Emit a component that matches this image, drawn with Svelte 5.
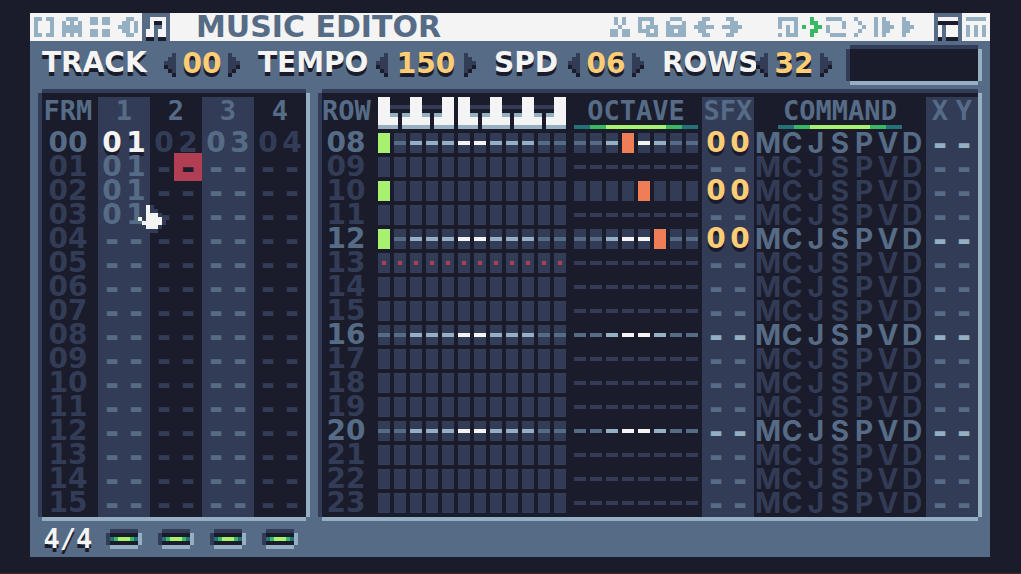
<script lang="ts">
	type Icon = { name: string; rows: string[]; active?: boolean; green?: boolean };

	const tabs: Icon[] = [
		{ name: 'Code editor', rows: ['##.##', '#...#', '#...#', '#...#', '##.##'] },
		{ name: 'Sprite editor', rows: ['.###.', '#.#.#', '#####', '#####', '#.#.#'] },
		{ name: 'Map editor', rows: ['##.##', '##.##', '.....', '##.##', '##.##'] },
		{ name: 'Sound editor', rows: ['..##.', '.##.#', '###.#', '.##.#', '..##.'] },
		{ name: 'Music editor', rows: ['.####', '.#..#', '.#..#', '##.##', '##.##'], active: true }
	];

	const editTools: Icon[] = [
		{ name: 'Cut', rows: ['.#.#.', '.#.#.', '..#..', '##.##', '##.##'] },
		{ name: 'Copy', rows: ['####.', '#..#.', '#.###', '###.#', '..###'] },
		{ name: 'Paste', rows: ['.###.', '#...#', '#####', '##.##', '#####'] },
		{ name: 'Undo', rows: ['..##.', '.##..', '#####', '.##..', '..##.'] },
		{ name: 'Redo', rows: ['.##..', '..##.', '#####', '..##.', '.##..'] }
	];

	const playTools: Icon[] = [
		{ name: 'Sustain', rows: ['#####', '#...#', '#.#.#', '..#.#', '#.###'] },
		{ name: 'Follow', rows: ['..#..', '..##.', '#..##', '..##.', '..#..'], green: true },
		{ name: 'Loop', rows: ['####.', '....#', '#...#', '#....', '.####'] },
		{ name: 'Play frame', rows: ['#..', '.#.', '..#', '.#.', '#..'] },
		{ name: 'Play from row', rows: ['#.#..', '#.##.', '#.###', '#.##.', '#.#..'] },
		{ name: 'Play track', rows: ['#..', '##.', '###', '##.', '#..'] }
	];

	const viewTabs: Icon[] = [
		{ name: 'Piano view', rows: ['#####', '.....', '#.###', '#.###', '#.###'], active: true },
		{ name: 'Tracker view', rows: ['#####', '.....', '#.#.#', '#.#.#', '#.#.#'] }
	];

	const arrowLeft = ['..#', '.##', '###', '.##', '..#'];
	const arrowRight = ['#..', '##.', '###', '##.', '#..'];

	const hand = ['..#....', '..#....', '..###..', '#.####.', '.#####.', '..###..'];
	const handShade = ['...#...', '...##..', '.....#.', '......#', '......#', '.....#.', '...##..'];

	let settings = $state([
		{ id: 'track', label: 'TRACK', value: 0, digits: 2 },
		{ id: 'tempo', label: 'TEMPO', value: 150, digits: 3 },
		{ id: 'spd', label: 'SPD', value: 6, digits: 2 },
		{ id: 'rows', label: 'ROWS', value: 32, digits: 2 }
	]);

	const pad = (n: number, digits = 2): string => String(n).padStart(digits, '0');

	const channels = [1, 2, 3, 4];
	let muted = $state([false, false, false, false]);

	const patterns = [['01', '02', '03', '04'], ['01'], ['01'], ['01']];
	const frames = Array.from({ length: 16 }, (_, i) => ({
		label: pad(i),
		cells: channels.map((_, c) => patterns[i]?.[c] ?? '--')
	}));
	const cursor = { frame: 1, channel: 1, digit: 1 };

	type Note = { key: number; octave: number; sfx: string };
	const notes: Record<number, Note> = {
		8: { key: 0, octave: 3, sfx: '00' },
		10: { key: 0, octave: 4, sfx: '00' },
		12: { key: 0, octave: 5, sfx: '00' }
	};
	const noteOff = 13;
	const rows = Array.from({ length: 16 }, (_, i) => {
		const index = i + 8;
		return { index, beat: index % 4 === 0, note: notes[index] };
	});

	// brightness of the beat line: 1 dim, 2 light, 3 white
	const keyLine = [1, 1, 2, 2, 2, 3, 3, 2, 2, 2, 1, 1];
	const octaveLine = [1, 1, 2, 3, 3, 2, 1, 1];

	const commands = [...'MCJSPVD'];

	const whiteKeys = [[0, 5], [6, 7], [14, 5], [20, 5], [26, 7], [34, 7], [42, 5]];
	const keyTops = [0, 8, 16, 20, 28, 36, 44];
	const blackKeys = [3, 11, 23, 31, 39];

	const step = (i: number, by: number) => {
		settings[i].value = Math.max(0, settings[i].value + by);
	};
</script>

{#snippet pixels(bitmap: string[], cls: string)}
	<g class={cls}>
		{#each bitmap as line, y}
			{#each [...line] as dot, x}
				{#if dot === '#'}<rect {x} {y} width="1" height="1" />{/if}
			{/each}
		{/each}
	</g>
{/snippet}

{#snippet icon(bitmap: string[], shaded: boolean)}
	<svg
		width={bitmap[0].length * 4}
		height={bitmap.length * 4}
		viewBox="0 0 {bitmap[0].length} {bitmap.length}"
		shape-rendering="crispEdges"
		aria-hidden="true"
	>
		{#if shaded}
			<g transform="translate(0 1)">{@render pixels(bitmap, 'shade')}</g>
		{/if}
		{@render pixels(bitmap, 'ink')}
	</svg>
{/snippet}

{#snippet iconButton(item: Icon)}
	<button class="icon" class:active={item.active} class:green={item.green} aria-label={item.name}>
		{@render icon(item.rows, !!item.active)}
	</button>
{/snippet}

{#snippet pair(text: string, selected: number)}
	<span class="pair">
		{#each [...text] as char, i}
			<span class="digit" class:dash={char === '-'} class:selected={i === selected}>{char}</span>
		{/each}
	</span>
{/snippet}

<svelte:head>
	<title>Music Editor</title>
</svelte:head>

<div class="screen">
	<main>
		<header>
			<nav>
				{#each tabs as item}{@render iconButton(item)}{/each}
			</nav>
			<h1>MUSIC EDITOR</h1>
			<div class="tools edit">
				{#each editTools as item}{@render iconButton(item)}{/each}
			</div>
			<div class="tools play">
				{#each playTools as item}{@render iconButton(item)}{/each}
			</div>
			<div class="tools">
				{#each viewTabs as item}{@render iconButton(item)}{/each}
			</div>
		</header>

		<section class="settings">
			{#each settings as { id, label, value, digits }, i}
				<div class="field">
					<label for={id}>{label}</label>
					<button aria-label="Decrease {label}" onclick={() => step(i, -1)}>
						{@render icon(arrowLeft, true)}
					</button>
					<input {id} class:wide={digits === 3} value={pad(value, digits)} readonly />
					<button aria-label="Increase {label}" onclick={() => step(i, 1)}>
						{@render icon(arrowRight, true)}
					</button>
				</div>
			{/each}
			<div class="scope inset"></div>
		</section>

		<section class="workspace">
			<div class="panel inset">
				<table class="frames">
					<thead>
						<tr>
							<th class="label">FRM</th>
							{#each channels as channel}<th>{channel}</th>{/each}
						</tr>
					</thead>
					<tbody>
						{#each frames as frame, f}
							<tr class:current={f === 0}>
								<th class="label" scope="row">{frame.label}</th>
								{#each frame.cells as cell, c}
									<td class:playing={f === 0 && c === 0}>
										{@render pair(
											cell,
											f === cursor.frame && c === cursor.channel ? cursor.digit : -1
										)}
									</td>
								{/each}
							</tr>
						{/each}
					</tbody>
				</table>
			</div>

			<div class="panel inset">
				<table class="rows">
					<thead>
						<tr>
							<th class="label">ROW</th>
							<th class="keys">
								<svg
									width="188"
									height="32"
									viewBox="0 0 47 8"
									shape-rendering="crispEdges"
									role="img"
									aria-label="Piano keys"
								>
									{#each blackKeys as x}<rect {x} y="2" width="5" height="1" fill="#333c57" />{/each}
									{#each whiteKeys as [x, w]}
										<rect {x} y="4" width={w} height="4" fill="#94b0c2" />
										<rect {x} y="5" width={w} height="2" fill="#f4f4f4" />
									{/each}
									{#each keyTops as x}<rect {x} y="0" width="3" height="7" fill="#f4f4f4" />{/each}
								</svg>
							</th>
							<th class="octave">OCTAVE<span class="meter"></span></th>
							<th class="sfx">SFX</th>
							<th class="command">COMMAND<span class="meter"></span></th>
							<th class="xy">
								<span class="pair"><span class="digit">X</span><span class="digit">Y</span></span>
							</th>
						</tr>
					</thead>
					<tbody>
						{#each rows as { index, beat, note }}
							<tr class:current={beat}>
								<th class="label" scope="row">{pad(index)}</th>
								<td class="keys">
									<div class="steps">
										{#each keyLine as level, k}
											<span
												class="step filled {beat ? `level${level}` : ''}"
												class:note={note?.key === k}
												class:off={index === noteOff}
											></span>
										{/each}
									</div>
								</td>
								<td class="octave">
									<div class="steps">
										{#each octaveLine as level, o}
											<span
												class="step {beat ? `level${level}` : note ? '' : 'level0'}"
												class:filled={note}
												class:pitch={note?.octave === o}
											></span>
										{/each}
									</div>
								</td>
								<td class="sfx" class:set={note}>{@render pair(note?.sfx ?? '--', -1)}</td>
								<td class="command">
									<span class="letters">
										{#each commands as letter}<span class="digit">{letter}</span>{/each}
									</span>
								</td>
								<td class="xy">{@render pair('--', -1)}</td>
							</tr>
						{/each}
					</tbody>
				</table>
			</div>
		</section>

		<footer>
			<span class="beats">4/4</span>
			{#each channels as channel, i}
				<button
					class="inset"
					aria-label="Channel {channel}"
					aria-pressed={!muted[i]}
					onclick={() => (muted[i] = !muted[i])}
				>
					<span class="led" class:muted={muted[i]}></span>
				</button>
			{/each}
		</footer>

		<svg
			class="hand"
			width="28"
			height="28"
			viewBox="0 0 7 7"
			shape-rendering="crispEdges"
			aria-hidden="true"
		>
			{@render pixels(handShade, 'hand-shade')}
			{@render pixels(hand, 'ink')}
		</svg>
	</main>
</div>

<style>
	:global(body) {
		background: #1a1c2c;
	}

	.screen {
		box-sizing: border-box;
		min-height: 100vh;
		padding: 13px 31px 16px 30px;
		border-bottom: 1px solid #4e2a1e;
		background: #1a1c2c;
		font: bold 28px/24px 'DejaVu Sans', sans-serif;
		color: #f4f4f4;
	}

	main {
		position: relative;
		background: #566c86;
	}

	svg {
		display: block;
		overflow: visible;
		fill: currentColor;
	}

	.shade {
		fill: #1a1c2c;
	}

	.hand-shade {
		fill: #333c57;
	}

	button {
		padding: 0;
		border: none;
		background: none;
		color: inherit;
		cursor: pointer;
	}

	.inset {
		background: #1a1c2c;
		box-shadow:
			-4px 0 #333c57,
			0 -4px #333c57,
			4px 0 #94b0c2,
			0 4px #94b0c2;
	}

	header {
		display: flex;
		height: 28px;
		background: #f4f4f4;
		color: #94b0c2;
	}

	nav,
	.tools {
		display: flex;
	}

	.icon {
		padding: 4px;
	}

	.icon.active {
		background: #566c86;
		color: #f4f4f4;
	}

	.icon.green {
		color: #38b764;
	}

	h1 {
		flex: 1;
		margin: 0 0 0 26px;
		font-size: 30px;
		line-height: 28px;
		color: #566c86;
	}

	.edit {
		margin-right: 32px;
	}

	.play {
		gap: 4px;
		margin-right: 20px;
	}

	.play .icon {
		padding: 4px 0;
	}

	.play .icon:nth-child(n + 4) {
		margin-left: 4px;
	}

	.settings {
		display: grid;
		grid-template-columns:
			minmax(0, 216fr) minmax(0, 236fr) minmax(0, 168fr) minmax(0, 188fr)
			minmax(0, 128fr);
		align-items: center;
		height: 48px;
		padding: 0 12px;
	}

	.field {
		display: flex;
		align-items: center;
		gap: 2px;
		padding-right: 18px;
		margin-bottom: 4px;
		text-shadow: 0 4px #1a1c2c;
	}

	.field label {
		flex: 1;
		min-width: 0;
	}

	.field button {
		color: #333c57;
	}

	.field input {
		width: 48px;
		height: 32px;
		padding: 0;
		border: none;
		outline: none;
		background: none;
		font: inherit;
		color: #ffcd75;
		text-align: center;
		text-shadow: inherit;
	}

	.field input.wide {
		width: 72px;
	}

	.scope {
		height: 32px;
	}

	.workspace {
		display: grid;
		grid-template-columns: 264px 1fr;
		gap: 16px;
		padding: 4px 12px 0;
	}

	.panel {
		padding-top: 4px;
	}

	table {
		width: 100%;
		table-layout: fixed;
		border-collapse: collapse;
		color: #333c57;
	}

	th,
	td {
		height: 24px;
		padding: 0;
		font-weight: bold;
		vertical-align: top;
	}

	tbody tr:last-child > * {
		padding-bottom: 2px;
	}

	thead th {
		height: 34px;
		font: bold 27px/28px 'DejaVu Sans Mono', monospace;
		color: #566c86;
	}

	.label {
		width: 52px;
		padding-right: 4px;
	}

	.rows .label {
		width: 48px;
		padding-right: 8px;
		padding-left: 0;
	}

	.current .label {
		color: #566c86;
	}

	.frames tr > :nth-child(even) {
		background: #333c57;
		color: #566c86;
	}

	.frames td.playing {
		color: #f4f4f4;
		text-shadow: 0 4px #1a1c2c;
	}

	.pair {
		display: flex;
		justify-content: center;
	}

	.letters {
		display: flex;
		padding-left: 2px;
		font-family: Inter, sans-serif;
		font-weight: 700;
	}

	.digit {
		display: flex;
		justify-content: center;
		width: 24px;
		height: 24px;
	}

	.dash {
		font-size: 34px;
	}

	.selected {
		background: #b13e53;
		box-shadow: 0 0 0 2px #b13e53;
		color: #1a1c2c;
	}

	.keys {
		width: 192px;
	}

	.octave {
		width: 132px;
	}

	.sfx,
	.xy {
		width: 52px;
		background: #333c57;
		color: #566c86;
	}

	.current .sfx,
	.current .xy {
		color: #94b0c2;
	}

	td.sfx.set {
		color: #ffcd75;
		text-shadow: 0 4px #1a1c2c;
	}

	.current .command {
		color: #566c86;
	}

	.meter {
		display: block;
		width: 124px;
		height: 4px;
		margin: 0 auto;
		background: linear-gradient(
			90deg,
			#257179 0 16px,
			#38b764 16px 32px,
			#a7f070 32px 92px,
			#38b764 92px 108px,
			#257179 108px
		);
	}

	.steps {
		display: flex;
		gap: 4px;
		padding: 2px 0;
	}

	.octave .steps {
		padding-left: 4px;
	}

	.step {
		display: flex;
		align-items: center;
		justify-content: center;
		width: 12px;
		height: 20px;
	}

	.step::before {
		content: '';
		width: 12px;
		height: 4px;
	}

	.filled {
		background: #333c57;
	}

	.level0::before {
		background: #333c57;
	}

	.level1::before {
		background: #566c86;
	}

	.level2::before {
		background: #94b0c2;
	}

	.level3::before {
		background: #f4f4f4;
	}

	.off::before {
		width: 4px;
		background: #b13e53;
	}

	.note,
	.note::before {
		background: #a7f070;
	}

	.pitch,
	.pitch::before {
		background: #ef7d57;
	}

	footer {
		display: grid;
		grid-template-columns: 56px repeat(4, 52px);
		align-items: center;
		justify-items: center;
		height: 36px;
		padding: 4px 12px 0;
	}

	.beats {
		padding-right: 4px;
		font: bold 27px/28px 'DejaVu Sans Mono', monospace;
		text-shadow: 0 4px #1a1c2c;
	}

	footer button {
		width: 28px;
		height: 12px;
	}

	.led {
		display: block;
		height: 4px;
		background: linear-gradient(
			90deg,
			#257179 0 4px,
			#38b764 4px 8px,
			#a7f070 8px 20px,
			#38b764 20px 24px,
			#257179 24px
		);
	}

	.led.muted {
		background: #333c57;
	}

	.hand {
		position: absolute;
		top: 192px;
		left: 108px;
	}
</style>
